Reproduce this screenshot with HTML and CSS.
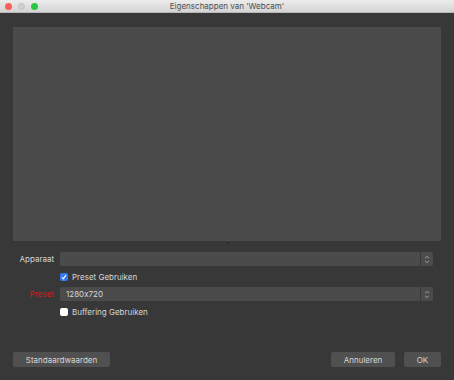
FILE: index.html
```html
<!DOCTYPE html>
<html lang="nl">
<head>
    <meta charset="UTF-8">
    <meta name="viewport" content="width=device-width, initial-scale=1.0">
    <title>Eigenschappen van 'Webcam'</title>
    <link rel="stylesheet" href="styles.css">
</head>
<body>
    <div class="window">
        <!-- Title bar -->
        <div class="titlebar">
            <div class="lights">
                <span class="light close"></span>
                <span class="light idle"></span>
                <span class="light zoom"></span>
            </div>
            <div class="title">Eigenschappen van 'Webcam'</div>
        </div>

        <div class="content">
            <!-- Preview -->
            <div class="preview"></div>
            <div class="splitter"><span class="grip"></span></div>

            <!-- Properties -->
            <div class="props">
                <label class="prop-label">Apparaat</label>
                <div class="select">
                    <div class="select-value"></div>
                    <div class="select-arrows">
                        <svg width="6" height="9" viewBox="0 0 6 9"><path d="M1 3.2 L3 1.4 L5 3.2 M1 5.8 L3 7.6 L5 5.8" fill="none" stroke="#9a9a9a" stroke-width="1"/></svg>
                    </div>
                </div>

                <span></span>
                <label class="check">
                    <span class="box checked">
                        <svg width="8" height="8" viewBox="0 0 8 8"><path d="M2 4.3 L3.4 5.8 L6 2" fill="none" stroke="#fff" stroke-width="1.2"/></svg>
                    </span>
                    Preset Gebruiken
                </label>

                <label class="prop-label warn">Preset</label>
                <div class="select">
                    <div class="select-value">1280x720</div>
                    <div class="select-arrows">
                        <svg width="6" height="9" viewBox="0 0 6 9"><path d="M1 3.2 L3 1.4 L5 3.2 M1 5.8 L3 7.6 L5 5.8" fill="none" stroke="#9a9a9a" stroke-width="1"/></svg>
                    </div>
                </div>

                <span></span>
                <label class="check">
                    <span class="box"></span>
                    Buffering Gebruiken
                </label>
            </div>

            <!-- Buttons -->
            <div class="buttons">
                <button class="btn defaults">Standaardwaarden</button>
                <div class="btn-group">
                    <button class="btn cancel">Annuleren</button>
                    <button class="btn ok">OK</button>
                </div>
            </div>
        </div>
    </div>
</body>
</html>
```

FILE: styles.css
```css
body {
    margin: 0;
    background: #383838;
    font-family: Inter, "Noto Sans", sans-serif;
    font-size: 8px;
    font-feature-settings: "calt" 0;
    color: #d6d6d6;
}

.window {
    width: 454px;
    height: 380px;
    display: flex;
    flex-direction: column;
    background: #383838;
}

.titlebar {
    position: relative;
    height: 13px;
    background: linear-gradient(#ececec, #d4d4d4);
    border-bottom: 1px solid #b9b9b9;
    box-sizing: border-box;
}

.lights {
    position: absolute;
    left: 5px;
    top: 3px;
    display: flex;
    gap: 6px;
}

.light {
    width: 7px;
    height: 7px;
    border-radius: 50%;
}

.light.close { background: #fc5f57; }
.light.idle { background: #d0d0d0; border: 0.5px solid #c2c2c2; box-sizing: border-box; }
.light.zoom { background: #2bc640; }

.title {
    text-align: center;
    line-height: 13px;
    color: #4d4d4d;
    font-size: 8px;
}

.content {
    flex: 1;
    display: flex;
    flex-direction: column;
    padding: 14px 13px 13px 13px;
}

.preview {
    height: 214px;
    background: #4b4b4b;
    border-radius: 1px;
}

.splitter {
    height: 11px;
    display: flex;
    justify-content: center;
}

.grip {
    width: 3px;
    height: 2px;
    margin-top: 1px;
    background: #2c2c2c;
    border-radius: 1px;
}

.props {
    display: grid;
    grid-template-columns: 41px 1fr;
    column-gap: 6px;
    row-gap: 3.5px;
    grid-auto-rows: 14px;
    margin-right: 8px;
}

.prop-label {
    text-align: right;
    line-height: 14px;
}

.prop-label.warn {
    color: #d21c1c;
}

.select {
    display: flex;
    gap: 1px;
}

.select-value {
    flex: 1;
    background: #4b4b4b;
    border-radius: 2px 0 0 2px;
    line-height: 14px;
    padding-left: 6px;
}

.select-arrows {
    width: 12px;
    background: #4b4b4b;
    border-radius: 0 2px 2px 0;
    display: flex;
    align-items: center;
    justify-content: center;
}

.check {
    display: flex;
    align-items: center;
    gap: 4px;
    line-height: 14px;
}

.box {
    width: 8px;
    height: 8px;
    border-radius: 2px;
    background: #ffffff;
    display: flex;
    align-items: center;
    justify-content: center;
}

.box.checked {
    background: #3478f6;
}

.buttons {
    margin-top: auto;
    display: flex;
    justify-content: space-between;
    align-items: flex-end;
}

.btn-group {
    display: flex;
    gap: 9px;
}

.btn {
    height: 15px;
    padding: 0;
    border: none;
    border-radius: 2px;
    background: #505050;
    color: #d6d6d6;
    font-family: inherit;
    font-size: 8px;
    font-feature-settings: "calt" 0;
}

.defaults { width: 97px; }
.cancel { width: 64px; }
.ok { width: 37px; }
```
